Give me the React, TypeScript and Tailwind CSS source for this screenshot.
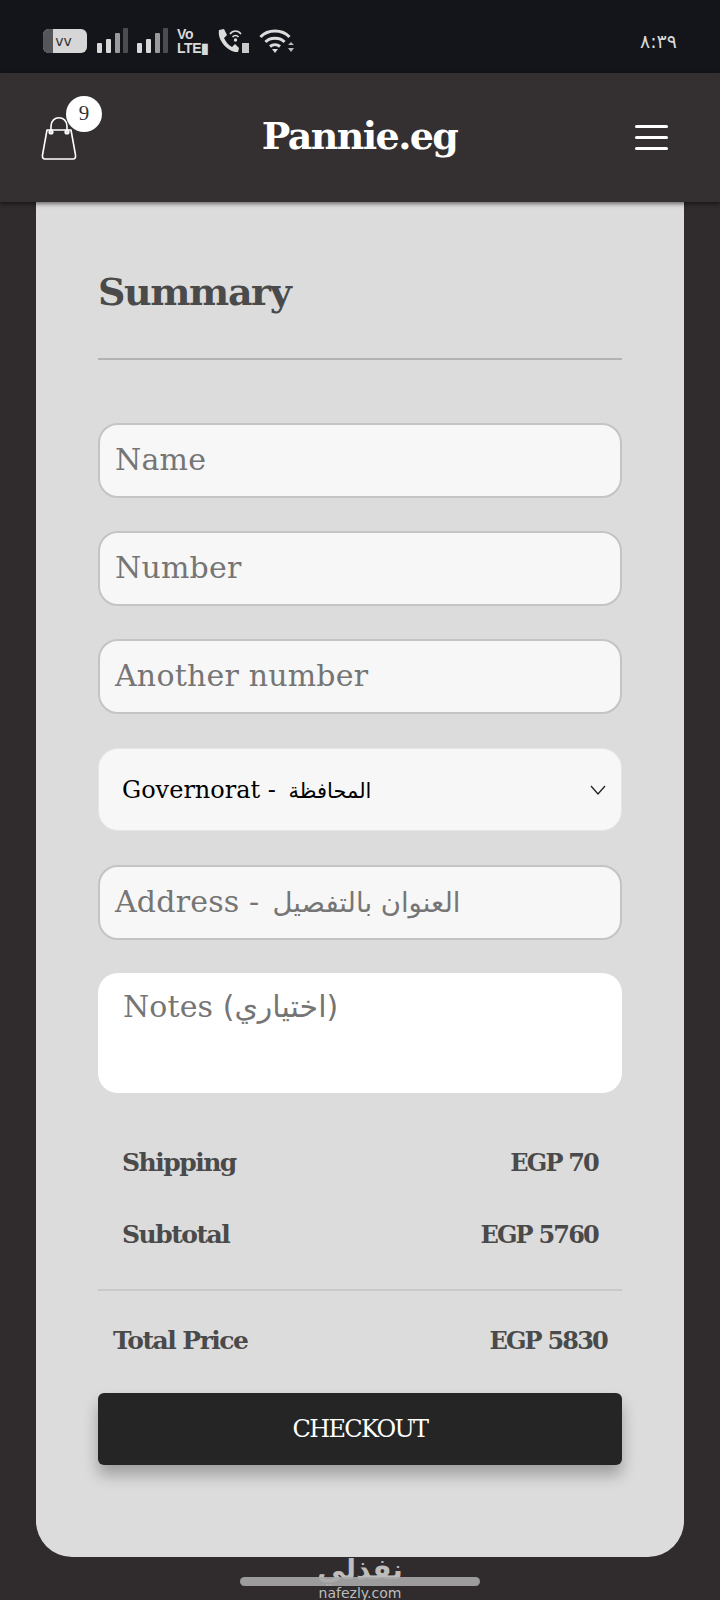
const serif = "font-['DejaVu_Serif','Liberation_Serif',serif]";

function Field({ text, ar }: { text: string; ar?: string }) {
  return (
    <div className="h-[75px] rounded-[20px] border-2 border-[#c4c4c4] bg-[#f7f7f7] px-[15px] flex items-center text-[30px] text-[#757575] tracking-[0.2px] whitespace-nowrap">
      <span className="mt-[-2px]">{text}</span>
      {ar && <span className="ml-[13px] text-[27.5px] tracking-normal font-['DejaVu_Sans',sans-serif]">{ar}</span>}
    </div>
  );
}

function Row({ l, r, cls }: { l: string; r: string; cls: string }) {
  return (
    <div className={`flex justify-between items-baseline text-[25px] font-bold text-[#4a4a4a] tracking-[-1.5px] ${cls}`}>
      <span>{l}</span>
      <span className="text-[24px] tracking-[-1.8px]">{r}</span>
    </div>
  );
}

function Bars() {
  return (
    <svg width="31" height="26" viewBox="0 0 31 26" fill="#d8d8d8">
      <rect x="0" y="15" width="5" height="10" rx="1" />
      <rect x="9" y="11" width="5" height="14" rx="1" />
      <rect x="18" y="5" width="5" height="20" rx="1" fill="#9a9a9a" />
      <rect x="26" y="0" width="5" height="25" rx="1" fill="#4b4c50" />
    </svg>
  );
}

export default function App() {
  return (
    <div className={`relative w-[720px] h-[1600px] overflow-hidden bg-[#302b2c] ${serif}`}>
      <div className="h-[73px] bg-[#14151a] flex items-center pl-[43px] pr-[43px] pt-[9px] text-[#d9d9d9]">
        <div className="w-[44px] h-[24px] rounded-[6px] bg-[#d6d6d6] mr-[10px] relative overflow-hidden flex items-center justify-center text-[14px] leading-none text-[#333] font-['DejaVu_Sans',sans-serif]">
          <div className="absolute left-0 top-0 bottom-0 w-[10px] bg-[#55565a]" />
          <span className="relative ml-[-3px]">vv</span>
        </div>
        <div className="flex gap-[9px] mr-[9px]">
          <Bars />
          <Bars />
        </div>
        <div className="w-[32px] mr-[8px] text-[14px] leading-[14px] font-bold font-['Liberation_Sans',sans-serif] tracking-[-0.4px] whitespace-nowrap">
          <div>Vo</div>
          <div>LTE▮</div>
        </div>
        <svg width="33" height="26" viewBox="0 0 33 26" className="mr-[9px]" fill="none">
          <path d="M2 2 L7 1 L10 7 L7 10 C9 14 11 17 15 19 L18 16 L22 20 L21 24 C12 25 0 13 2 2Z" fill="#dcdcdc" />
          <path d="M13 6 C16 2 21 2 24 6 M15.5 9 C17 7 20 7 21.5 9" stroke="#dcdcdc" strokeWidth="1.5" />
          <circle cx="18.5" cy="12" r="1.7" fill="#dcdcdc" />
          <rect x="25" y="15" width="7" height="10" fill="#c9c9c9" />
        </svg>
        <svg width="36" height="26" viewBox="0 0 36 26" fill="none" stroke="#dcdcdc" strokeWidth="3">
          <path d="M1.5 9 C9 1 23 1 30.5 9" />
          <path d="M6.5 14 C11 9 21 9 25.5 14" />
          <path d="M11 18.5 C14 16 18 16 21 18.5" />
          <path d="M13 21 L16 25 L19 21 Z" fill="#dcdcdc" stroke="none" />
          <path d="M29 17 L32 14 L35 17Z M29 20 L35 20 L32 24Z" fill="#b9b9b9" stroke="none" />
        </svg>
        <span className="ml-auto text-[19px] leading-none font-['DejaVu_Sans',sans-serif] tracking-[0.5px]">٨:٣٩</span>
      </div>

      <div className="relative z-10 h-[129px] bg-[#342f30] shadow-[0_2px_4px_rgba(0,0,0,0.5)] flex items-center justify-between pl-[41px] pr-[52px]">
        <div className="relative w-[36px] h-[44px]">
          <svg width="36" height="44" viewBox="0 0 36 44" fill="none" stroke="#fff" strokeWidth="1.6">
            <path d="M6 14 H30 L34.5 39 Q35 43 32 43 H4 Q1 43 1.5 39 Z" strokeLinejoin="round" />
            <path d="M10 17 V10 C10 -1 26 -1 26 10 V17" />
            <circle cx="10" cy="16" r="1.8" />
            <circle cx="26" cy="16" r="1.8" />
          </svg>
          <div className="absolute left-[25px] top-[-20px] w-[36px] h-[36px] rounded-full bg-white text-[#333] text-[21px] flex items-center justify-center font-['Liberation_Serif',serif]">9</div>
        </div>
        <div className="text-[38px] leading-[46px] mb-[4px] ml-[7px] font-bold text-white tracking-[-1.6px]">Pannie.eg</div>
        <div className="w-[33px] flex flex-col gap-[8px]">
          <div className="h-[3px] bg-white rounded-full" />
          <div className="h-[3px] bg-white rounded-full" />
          <div className="h-[3px] bg-white rounded-full" />
        </div>
      </div>

      <div className="mx-[36px] h-[1355px] bg-[#dcdcdc] rounded-b-[36px] px-[62px] pt-[65px]">
        <h2 className="text-[38px] leading-[50px] font-bold text-[#4a4a4a] tracking-[-1.4px]">Summary</h2>
        <div className="h-[2px] bg-[#b3b3b3] mt-[41px] mb-[63px]" />

        <div className="flex flex-col gap-[33px]">
          <Field text="Name" />
          <Field text="Number" />
          <Field text="Another number" />
        </div>

        <div className="mt-[34px] h-[83px] rounded-[20px] border border-[#e6e6e6] bg-[#f7f7f7] pl-[23px] pr-[15px] flex items-center justify-between text-[24px] text-black tracking-[0px]">
          <span>Governorat - <span className="ml-[5px] text-[21px] tracking-normal font-['DejaVu_Sans',sans-serif]">المحافظة</span></span>
          <svg width="16" height="10" viewBox="0 0 16 10" fill="none" stroke="#222" strokeWidth="1.3"><path d="M1 1 L8 9 L15 1" /></svg>
        </div>

        <div className="mt-[34px]">
          <Field text="Address -" ar="العنوان بالتفصيل" />
        </div>

        <div className="mt-[33px] h-[120px] rounded-[20px] bg-white pl-[25px] pt-[12px] text-[30px] text-[#757575] tracking-[0.1px] leading-[44px]">
          Notes <span className="tracking-normal font-['DejaVu_Sans',sans-serif] text-[30px]">(اختياري)</span>
        </div>

        <Row l="Shipping" r="EGP 70" cls="px-[24px] mt-[50px] leading-[40px]" />
        <Row l="Subtotal" r="EGP 5760" cls="px-[24px] mt-[32px] leading-[40px]" />
        <div className="h-[2px] bg-[#c9c9c9] mt-[34px]" />
        <Row l="Total Price" r="EGP 5830" cls="px-[15px] mt-[30px] leading-[40px]" />

        <div className="mt-[32px] h-[72px] rounded-[6px] bg-[#252525] shadow-[0_10px_15px_rgba(0,0,0,0.28)] flex items-center justify-center text-white text-[24px] tracking-[-1.7px]">
          CHECKOUT
        </div>
      </div>

      <div className="absolute left-0 right-0 bottom-0 h-[46px] flex flex-col items-center text-[#bdbdbd]">
        <div className="text-[28px] leading-[32px] font-bold font-['DejaVu_Sans',sans-serif]">نفذلي</div>
        <div className="text-[14px] leading-[14px] font-['DejaVu_Sans',sans-serif]">nafezly.com</div>
      </div>
      <div className="absolute left-[240px] bottom-[14px] w-[240px] h-[9px] rounded-full bg-[#a8a8a8] opacity-90" />
    </div>
  );
}
